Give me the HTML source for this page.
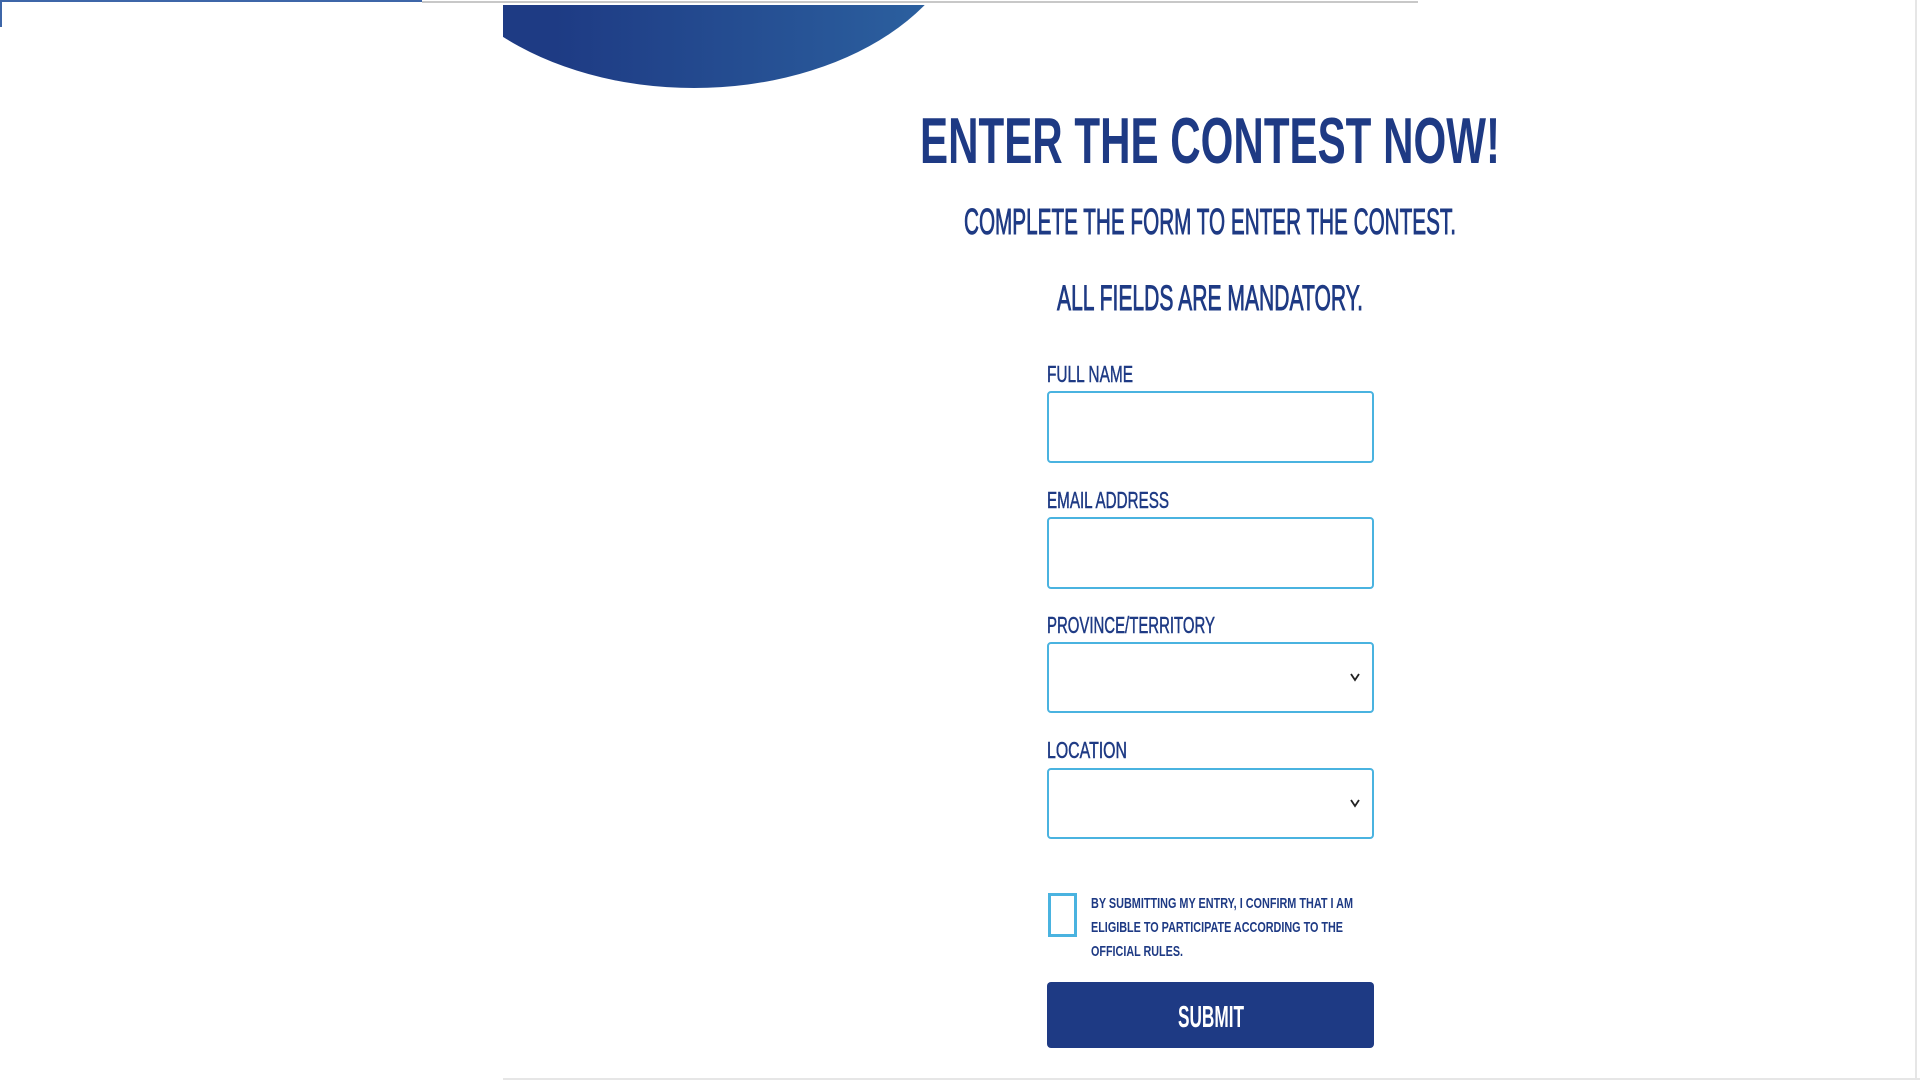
<!DOCTYPE html>
<html><head><meta charset="utf-8"><style>html,body{margin:0;padding:0;background:#fff;width:1920px;height:1080px;overflow:hidden}svg{display:block}</style></head>
<body>
<svg width="1920" height="1080" viewBox="0 0 1920 1080" xmlns="http://www.w3.org/2000/svg" font-family="Liberation Sans, sans-serif" font-weight="bold">
<defs>
<linearGradient id="g" x1="0" x2="1" y1="0" y2="0"><stop offset="0.25" stop-color="#1e3b84"/><stop offset="1" stop-color="#2d64a2"/></linearGradient>
<clipPath id="c"><rect x="503" y="5" width="500" height="200"/></clipPath>
</defs>
<rect x="0" y="0" width="422" height="2" fill="#3d66a8"/>
<rect x="0" y="0" width="2" height="27" fill="#3d66a8"/>
<rect x="422" y="1" width="996" height="2" fill="#c8c8c8"/>
<ellipse cx="694" cy="-96" rx="276" ry="184" fill="url(#g)" clip-path="url(#c)"/>
<rect x="1915" y="0" width="2" height="1080" fill="#e6e6e6"/>
<rect x="503" y="1078" width="1417" height="2" fill="#e6e6e6"/>
<g fill="#1e3a84">
<text x="920" y="163" font-size="65" textLength="580" lengthAdjust="spacingAndGlyphs">ENTER THE CONTEST NOW!</text>
<text x="964" y="234" font-size="36" font-weight="normal" textLength="492" lengthAdjust="spacingAndGlyphs" stroke="#1e3a84" stroke-width="0.9">COMPLETE THE FORM TO ENTER THE CONTEST.</text>
<text x="1057" y="310" font-size="35" font-weight="normal" textLength="306" lengthAdjust="spacingAndGlyphs" stroke="#1e3a84" stroke-width="0.9">ALL FIELDS ARE MANDATORY.</text>
<g font-size="23" font-weight="normal" stroke="#1e3a84" stroke-width="0.5">
<text x="1047" y="382" textLength="86" lengthAdjust="spacingAndGlyphs">FULL NAME</text>
<text x="1047" y="508" textLength="122" lengthAdjust="spacingAndGlyphs">EMAIL ADDRESS</text>
<text x="1047" y="633" textLength="168" lengthAdjust="spacingAndGlyphs">PROVINCE/TERRITORY</text>
<text x="1047" y="758" textLength="80" lengthAdjust="spacingAndGlyphs">LOCATION</text>
</g>
<g font-size="15">
<text x="1091" y="908" textLength="262" lengthAdjust="spacingAndGlyphs">BY SUBMITTING MY ENTRY, I CONFIRM THAT I AM</text>
<text x="1091" y="932" textLength="252" lengthAdjust="spacingAndGlyphs">ELIGIBLE TO PARTICIPATE ACCORDING TO THE</text>
<text x="1091" y="956" textLength="92" lengthAdjust="spacingAndGlyphs">OFFICIAL RULES.</text>
</g>
</g>
<g fill="#fff" stroke="#4ab3e0" stroke-width="2">
<rect x="1048" y="392" width="325" height="70" rx="3"/>
<rect x="1048" y="518" width="325" height="70" rx="3"/>
<rect x="1048" y="643" width="325" height="69" rx="3"/>
<rect x="1048" y="769" width="325" height="69" rx="3"/>
</g>
<rect x="1049.5" y="894.5" width="26" height="41" fill="#fff" stroke="#4ab3e0" stroke-width="3"/>
<g fill="none" stroke="#222" stroke-width="1.8">
<path d="M1351 674 L1355 680 L1359 674"/>
<path d="M1351 800 L1355 806 L1359 800"/>
</g>
<rect x="1047" y="982" width="327" height="66" rx="4" fill="#1e3a84"/>
<text x="1178" y="1027" font-size="31" fill="#fff" textLength="66" lengthAdjust="spacingAndGlyphs">SUBMIT</text>
</svg>
</body></html>
